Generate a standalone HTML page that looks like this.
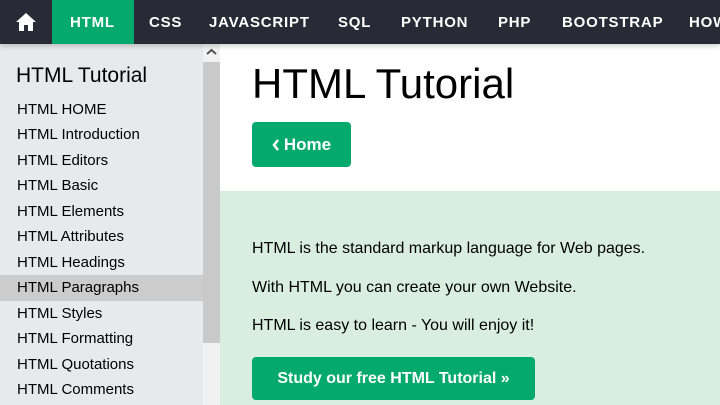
<!DOCTYPE html><html><head><style>
body{margin:0;width:720px;height:405px;overflow:hidden;font-family:"Liberation Sans",sans-serif;background:#fff;position:relative}
.nav{position:absolute;top:0;left:0;width:720px;height:44px;background:#282A35;white-space:nowrap;box-shadow:0 2px 5px rgba(0,0,0,.2);z-index:2}
.nav span{position:absolute;top:0;height:44px;line-height:46px;color:#fff;font-weight:bold;font-size:15px;letter-spacing:0.8px}
.side{position:absolute;top:44px;left:0;width:203px;height:361px;background:#E7E9EB}
.side h2{margin:0;position:absolute;left:16px;top:20px;font-size:21px;font-weight:normal;color:#000}
.side div{position:absolute;left:0;width:203px;height:26px;line-height:26px;padding-left:17px;box-sizing:border-box;font-size:15px;color:#000}
.sb{position:absolute;left:203px;top:44px;width:17px;height:361px;background:#f1f1f1}
.thumb{position:absolute;left:203px;top:62px;width:17px;height:281px;background:#c9c9c9}
h1{position:absolute;left:252px;top:60px;margin:0;font-size:42px;font-weight:normal;color:#000}
.btn{position:absolute;background:#04AA6D;color:#fff;font-weight:bold;border-radius:4px;text-align:center}
.green{position:absolute;left:220px;top:191px;width:500px;height:214px;background:#D9EEE1}
.green p{position:absolute;left:32px;margin:0;font-size:16px;color:#000;white-space:nowrap}
</style></head><body>
<div class="nav">
<svg style="position:absolute;left:15px;top:12px" width="22" height="20" viewBox="0 0 22 20"><path d="M11 1L1 10h3v9h5v-6h4v6h5v-9h3z" fill="#fff"/></svg>
<div style="position:absolute;left:52px;top:0;width:82px;height:44px;background:#04AA6D"></div>
<span style="left:70px">HTML</span><span style="left:149px">CSS</span><span style="left:209px">JAVASCRIPT</span><span style="left:338px">SQL</span><span style="left:401px">PYTHON</span><span style="left:498px">PHP</span><span style="left:562px">BOOTSTRAP</span><span style="left:689px">HOW</span>
</div>
<div class="side"><h2>HTML Tutorial</h2>
<div style="top:53px">HTML HOME</div><div style="top:78px">HTML Introduction</div><div style="top:104px">HTML Editors</div><div style="top:129px">HTML Basic</div><div style="top:155px">HTML Elements</div><div style="top:180px">HTML Attributes</div><div style="top:206px">HTML Headings</div><div style="top:231px;background:#ccc">HTML Paragraphs</div><div style="top:257px">HTML Styles</div><div style="top:282px">HTML Formatting</div><div style="top:308px">HTML Quotations</div><div style="top:333px">HTML Comments</div>
</div>
<div class="sb"></div><div class="thumb"></div>
<svg style="position:absolute;left:206px;top:48px" width="11" height="8"><path d="M1 6L5.5 2L10 6" stroke="#555" stroke-width="2" fill="none"/></svg>
<h1>HTML Tutorial</h1>
<div class="btn" style="left:252px;top:122px;width:99px;height:45px;line-height:45px;font-size:17px"><svg width="8" height="12" viewBox="0 0 8 12" style="vertical-align:-1px;margin-right:4px"><path d="M6 1L2 6l4 5" stroke="#fff" stroke-width="2.5" fill="none"/></svg>Home</div>
<div class="green">
<p style="top:49px">HTML is the standard markup language for Web pages.</p>
<p style="top:88px">With HTML you can create your own Website.</p>
<p style="top:126px">HTML is easy to learn - You will enjoy it!</p>
<div class="btn" style="left:32px;top:166px;width:283px;height:43px;line-height:43px;font-size:16px">Study our free HTML Tutorial »</div>
</div>
</body></html>
